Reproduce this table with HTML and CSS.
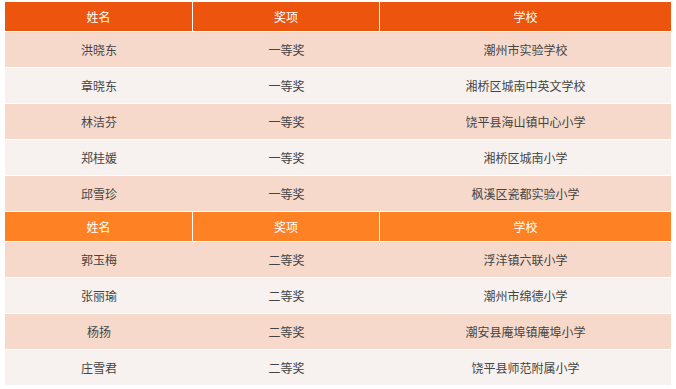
FILE: index.html
```html
<!DOCTYPE html>
<html lang="zh">
<head>
<meta charset="utf-8">
<link rel="stylesheet" href="styles.css">
</head>
<body>
<div class="wrap">
<table class="awards">
<colgroup><col class="c1"><col class="c2"><col class="c3"></colgroup>
<tr class="head head-first"><th>姓名</th><th>奖项</th><th>学校</th></tr>
<tr class="odd"><td>洪晓东</td><td>一等奖</td><td>潮州市实验学校</td></tr>
<tr class="even"><td>章晓东</td><td>一等奖</td><td>湘桥区城南中英文学校</td></tr>
<tr class="odd"><td>林洁芬</td><td>一等奖</td><td>饶平县海山镇中心小学</td></tr>
<tr class="even"><td>郑桂媛</td><td>一等奖</td><td>湘桥区城南小学</td></tr>
<tr class="odd"><td>邱雪珍</td><td>一等奖</td><td>枫溪区瓷都实验小学</td></tr>
<tr class="head head-second"><th>姓名</th><th>奖项</th><th>学校</th></tr>
<tr class="odd"><td>郭玉梅</td><td>二等奖</td><td>浮洋镇六联小学</td></tr>
<tr class="even"><td>张丽瑜</td><td>二等奖</td><td>潮州市绵德小学</td></tr>
<tr class="odd"><td>杨扬</td><td>二等奖</td><td>潮安县庵埠镇庵埠小学</td></tr>
<tr class="even"><td>庄雪君</td><td>二等奖</td><td>饶平县师范附属小学</td></tr>
</table>
</div>
</body>
</html>
```
FILE: styles.css
```css
html, body {
  margin: 0;
  padding: 0;
  background: #ffffff;
}
.wrap {
  padding: 2px 5px 0 5px;
}
.awards {
  width: 666px;
  border-collapse: separate;
  border-spacing: 0;
  table-layout: fixed;
  font-family: "Noto Sans CJK SC", "Noto Sans", sans-serif;
  font-size: 12px;
  color: #444444;
}
.c1 { width: 188px; }
.c2 { width: 187px; }
.c3 { width: 291px; }
.awards th,
.awards td {
  padding: 0;
  text-align: center;
  border-bottom: 1px solid #ffffff;
  font-weight: normal;
  line-height: 16px;
}
.awards th {
  height: 29px;
  color: #ffffff;
  border-right: 1px solid #ffffff;
}
.awards th:last-child {
  border-right: none;
}
.awards td {
  height: 35px;
}
.head-first th { background: #ed540e; }
.head-second th { background: #fe8124; }
.odd td { background: #f6d9cb; }
.even td { background: #f7f2ef; }
```
